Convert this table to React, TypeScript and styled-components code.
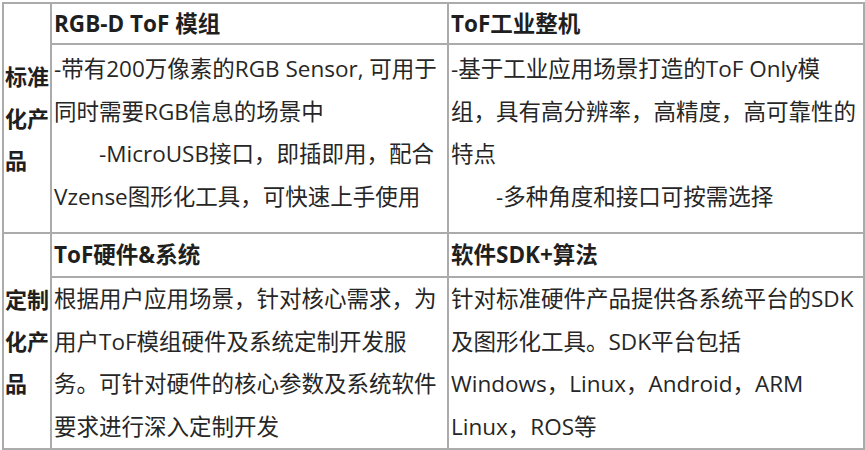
import React from 'react';
import styled, { createGlobalStyle } from 'styled-components';

const GlobalStyle = createGlobalStyle`
  html, body {
    margin: 0;
    padding: 0;
    background: #fff;
  }
  body {
    font-family: 'Open Sans', 'Noto Sans CJK SC', sans-serif;
    color: #262626;
  }
`;

const Page = styled.div`
  padding: 2px 0 0 2px;
`;

const Table = styled.table`
  border-collapse: collapse;
  table-layout: fixed;
  width: 861px;
  font-size: 22.5px;
  line-height: 42.5px;

  td {
    border: 2px solid #ababab;
    padding: 0 0 0 2px;
  }
`;

const SideCell = styled.td`
  font-size: 22px;
  font-weight: 700;
  color: #1f1f1f;
  vertical-align: middle;
  line-height: 42px;
  word-break: break-all;
  && {
    padding: 0 0 0 1px;
  }
`;

const HeadCell = styled.td<{ $h: number }>`
  height: ${(p) => p.$h}px;
  font-weight: 700;
  color: #1f1f1f;
  vertical-align: middle;
  white-space: nowrap;
  line-height: 30px;
`;

const BodyCell = styled.td<{ $h: number; $top: number }>`
  height: ${(p) => p.$h}px;
  vertical-align: top;
  && {
    padding-top: ${(p) => p.$top}px;
  }
`;

const Line = styled.span<{ $indent?: boolean }>`
  display: block;
  white-space: nowrap;
  padding-left: ${(p) => (p.$indent ? 45 : 0)}px;
`;

const Col1 = styled.col`
  width: 48px;
`;
const Col2 = styled.col`
  width: 397px;
`;
const Col3 = styled.col`
  width: 416px;
`;

export default function App() {
  return (
    <Page>
      <GlobalStyle />
      <Table>
        <colgroup>
          <Col1 />
          <Col2 />
          <Col3 />
        </colgroup>
        <tbody>
          <tr>
            <SideCell rowSpan={2}>标准化产品</SideCell>
            <HeadCell $h={39}>RGB-D ToF 模组</HeadCell>
            <HeadCell $h={39}>ToF工业整机</HeadCell>
          </tr>
          <tr>
            <BodyCell $h={184} $top={3}>
              <Line>-带有200万像素的RGB Sensor, 可用于</Line>
              <Line>同时需要RGB信息的场景中</Line>
              <Line $indent>-MicroUSB接口，即插即用，配合</Line>
              <Line>Vzense图形化工具，可快速上手使用</Line>
            </BodyCell>
            <BodyCell $h={184} $top={3}>
              <Line>-基于工业应用场景打造的ToF Only模</Line>
              <Line>组，具有高分辨率，高精度，高可靠性的</Line>
              <Line>特点</Line>
              <Line $indent>-多种角度和接口可按需选择</Line>
            </BodyCell>
          </tr>
          <tr>
            <SideCell rowSpan={2}>定制化产品</SideCell>
            <HeadCell $h={42}>ToF硬件&amp;系统</HeadCell>
            <HeadCell $h={42}>软件SDK+算法</HeadCell>
          </tr>
          <tr>
            <BodyCell $h={167} $top={0}>
              <Line>根据用户应用场景，针对核心需求，为</Line>
              <Line>用户ToF模组硬件及系统定制开发服</Line>
              <Line>务。可针对硬件的核心参数及系统软件</Line>
              <Line>要求进行深入定制开发</Line>
            </BodyCell>
            <BodyCell $h={167} $top={0}>
              <Line>针对标准硬件产品提供各系统平台的SDK</Line>
              <Line>及图形化工具。SDK平台包括</Line>
              <Line>Windows，Linux，Android，ARM</Line>
              <Line>Linux，ROS等</Line>
            </BodyCell>
          </tr>
        </tbody>
      </Table>
    </Page>
  );
}
